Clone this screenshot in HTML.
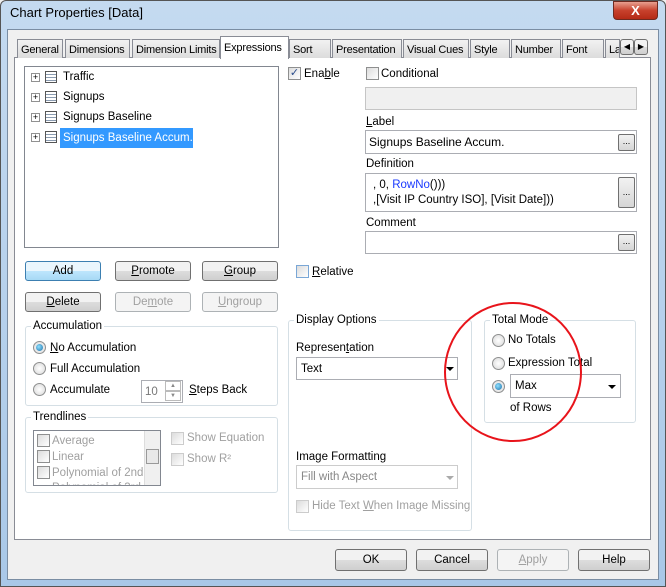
<!DOCTYPE html><html><head><style>
*{box-sizing:border-box}
body{margin:0;width:666px;height:587px;overflow:hidden;font-family:"Liberation Sans",sans-serif;font-size:11.5px;line-height:16px;color:#000;background:#f0f0f0;position:relative}
.a{position:absolute;white-space:nowrap}
.win{left:0;top:0;width:666px;height:587px;background:linear-gradient(#c4daf0,#a9c8e8);border:1px solid #555;border-radius:6px 6px 0 0}
.client{left:7px;top:29px;width:652px;height:551px;background:#f0f0f0;border:1px solid #7a8da3}
.panel{left:14px;top:57px;width:637px;height:483px;background:#fff;border:1px solid #898c95}
.tab{top:39px;height:19px;border:1px solid #898c95;border-bottom:none;background:linear-gradient(#f2f2f2,#dcdcdc);padding:2px 0 0 3px;overflow:hidden;font-size:11px;letter-spacing:-0.2px}
.sel{top:36px;height:23px;background:#fff;z-index:2}
.box{background:#fff;border:1px solid #abadb3}
.btn{border:1px solid #707070;border-radius:3px;background:linear-gradient(#f2f2f2 50%,#dddddd 50%,#cfcfcf);text-align:center;line-height:18px}
.dis{border-color:#adb2b5;color:#a0a0a0;background:#f4f4f4}
.grp{border:1px solid #d5dfe5;border-radius:3px}
.gt{background:#fff;padding:0 2px}
.cb{width:13px;height:13px;border:1px solid #8e8f8f;background:linear-gradient(135deg,#dcdcdc,#fff)}
.rb{width:13px;height:13px;border:1px solid #8e8f8f;border-radius:50%;background:radial-gradient(#fff,#d8d8d8)}
.rb.on::after{content:"";position:absolute;left:2px;top:2px;width:7px;height:7px;border-radius:50%;background:radial-gradient(circle at 40% 40%,#8fe0ff,#1b6fa8)}
.g{color:#a0a0a0}
.tri{width:0;height:0;border-left:4px solid transparent;border-right:4px solid transparent;border-top:4px solid #000}
.dots{width:17px;height:17px;border:1px solid #707070;border-radius:2px;background:linear-gradient(#f2f2f2,#d6d6d6);font-size:9px;text-align:center;line-height:12px}
.it{height:20px;line-height:21px}
.pl{width:9px;height:9px;border:1px solid #919191;font-size:9px;line-height:7px;text-align:center;background:#fff}
.ic{width:12px;height:12px;border:1px solid #555;background:repeating-linear-gradient(#fff 0 2px,#8a9bb0 2px 3px)}
</style></head><body>
<div class="a win"></div>
<div class="a" style="left:10px;top:5px;font-size:13px">Chart Properties [Data]</div>
<div class="a" style="left:613px;top:1px;width:45px;height:19px;border:1px solid #6e2a20;border-radius:0 0 4px 4px;background:linear-gradient(#e8a090,#c7412c 50%,#b52a16);color:#fff;font-weight:bold;text-align:center;line-height:18px;font-size:13px">X</div>
<div class="a client"></div>
<div class="a panel"></div>
<div class="a tab" style="left:17px;width:46px">General</div>
<div class="a tab" style="left:65px;width:65px">Dimensions</div>
<div class="a tab" style="left:132px;width:88px">Dimension Limits</div>
<div class="a tab sel" style="left:220px;width:69px;padding-top:3px">Expressions</div>
<div class="a tab" style="left:289px;width:42px">Sort</div>
<div class="a tab" style="left:332px;width:70px">Presentation</div>
<div class="a tab" style="left:403px;width:66px">Visual Cues</div>
<div class="a tab" style="left:470px;width:40px">Style</div>
<div class="a tab" style="left:511px;width:50px">Number</div>
<div class="a tab" style="left:562px;width:42px">Font</div>
<div class="a tab" style="left:605px;width:15px">La</div>
<div class="a btn" style="left:620px;top:39px;width:14px;height:16px;font-size:8px;line-height:14px">◀</div>
<div class="a btn" style="left:634px;top:39px;width:14px;height:16px;font-size:8px;line-height:14px">▶</div>

<div class="a box" style="left:24px;top:66px;width:255px;height:182px;border-color:#828790"></div>
<div class="a pl" style="left:31px;top:73px">+</div><div class="a ic" style="left:45px;top:71px"></div><div class="a it" style="left:60px;top:67px;padding:0 3px">Traffic</div>
<div class="a pl" style="left:31px;top:93px">+</div><div class="a ic" style="left:45px;top:91px"></div><div class="a it" style="left:60px;top:87px;padding:0 3px">Signups</div>
<div class="a pl" style="left:31px;top:113px">+</div><div class="a ic" style="left:45px;top:111px"></div><div class="a it" style="left:60px;top:107px;padding:0 3px">Signups Baseline</div>
<div class="a pl" style="left:31px;top:133px">+</div><div class="a ic" style="left:45px;top:131px"></div><div class="a it" style="left:60px;top:128px;width:133px;background:#3399ff;color:#fff;padding:0 3px">Signups Baseline Accum.</div>

<div class="a btn" style="left:25px;top:261px;width:76px;height:20px;border-color:#3c7fb1;background:linear-gradient(#eaf6fd 50%,#bee6fd 50%,#a7d9f5)">Add</div>
<div class="a btn" style="left:115px;top:261px;width:76px;height:20px"><u>P</u>romote</div>
<div class="a btn" style="left:202px;top:261px;width:76px;height:20px"><u>G</u>roup</div>
<div class="a btn" style="left:25px;top:292px;width:76px;height:20px"><u>D</u>elete</div>
<div class="a btn dis" style="left:115px;top:292px;width:76px;height:20px">De<u>m</u>ote</div>
<div class="a btn dis" style="left:202px;top:292px;width:76px;height:20px"><u>U</u>ngroup</div>

<div class="a grp" style="left:25px;top:326px;width:253px;height:80px"></div>
<div class="a gt" style="left:31px;top:318px">Accumulation</div>
<div class="a rb on" style="left:33px;top:341px"></div><div class="a" style="left:50px;top:340px"><u>N</u>o Accumulation</div>
<div class="a rb" style="left:33px;top:362px"></div><div class="a" style="left:50px;top:361px">Full Accumulation</div>
<div class="a rb" style="left:33px;top:383px"></div><div class="a" style="left:50px;top:382px">Accumulate</div>
<div class="a box" style="left:141px;top:380px;width:42px;height:23px;color:#777;padding:3px 0 0 3px">10</div>
<div class="a" style="left:165px;top:381px;width:16px;height:10px;border:1px solid #bbb;font-size:6px;line-height:8px;text-align:center;color:#888">▲</div>
<div class="a" style="left:165px;top:391px;width:16px;height:10px;border:1px solid #bbb;font-size:6px;line-height:8px;text-align:center;color:#888">▼</div>
<div class="a" style="left:189px;top:382px"><u>S</u>teps Back</div>

<div class="a grp" style="left:25px;top:417px;width:253px;height:76px"></div>
<div class="a gt" style="left:31px;top:409px">Trendlines</div>
<div class="a box" style="left:33px;top:430px;width:128px;height:56px;border-color:#828790;overflow:hidden">
<div class="a cb" style="left:3px;top:3px"></div><div class="a g" style="left:18px;top:2px">Average</div>
<div class="a cb" style="left:3px;top:19px"></div><div class="a g" style="left:18px;top:18px">Linear</div>
<div class="a cb" style="left:3px;top:35px"></div><div class="a g" style="left:18px;top:34px">Polynomial of 2nd d</div>
<div class="a g" style="left:18px;top:49px">Polynomial of 3rd d</div>
<div class="a" style="right:0;top:0;width:16px;height:54px;background:#f0f0f0;border-left:1px solid #ddd"><div class="a" style="left:1px;top:18px;width:13px;height:15px;border:1px solid #999;background:#e8e8e8"></div></div>
</div>
<div class="a cb" style="left:171px;top:432px;border-color:#ccc"></div><div class="a g" style="left:187px;top:430px">Show Equation</div>
<div class="a cb" style="left:171px;top:453px;border-color:#ccc"></div><div class="a g" style="left:187px;top:451px">Show R²</div>

<div class="a cb" style="left:288px;top:67px;text-align:center;font-size:11px;line-height:11px;color:#2a4c8c">✓</div><div class="a" style="left:304px;top:66px">Ena<u>b</u>le</div>
<div class="a cb" style="left:366px;top:67px"></div><div class="a" style="left:381px;top:66px">Conditional</div>
<div class="a" style="left:365px;top:87px;width:272px;height:23px;background:#f0f0f0;border:1px solid #c5c5c5"></div>
<div class="a" style="left:366px;top:114px"><u>L</u>abel</div>
<div class="a box" style="left:365px;top:130px;width:272px;height:24px;padding:3px 3px;font-size:12px">Signups Baseline Accum.</div>
<div class="a dots" style="left:618px;top:134px">...</div>
<div class="a" style="left:366px;top:156px">Definition</div>
<div class="a box" style="left:365px;top:173px;width:272px;height:39px;padding:4px 7px;line-height:15px">, 0, <span style="color:#1a3aff">RowNo</span>()))<br>,[Visit IP Country ISO], [Visit Date]))</div>
<div class="a dots" style="left:618px;top:177px;height:31px;line-height:28px">...</div>
<div class="a" style="left:366px;top:215px">Comment</div>
<div class="a box" style="left:365px;top:231px;width:272px;height:23px"></div>
<div class="a dots" style="left:618px;top:234px">...</div>
<div class="a cb" style="left:296px;top:265px;border-color:#7aa7d6"></div><div class="a" style="left:312px;top:264px"><u>R</u>elative</div>

<div class="a grp" style="left:288px;top:320px;width:184px;height:211px"></div>
<div class="a gt" style="left:294px;top:312px">Display Options</div>
<div class="a" style="left:296px;top:340px">Represen<u>t</u>ation</div>
<div class="a box" style="left:296px;top:357px;width:162px;height:23px;padding:3px 4px">Text</div>
<div class="a tri" style="left:446px;top:367px"></div>
<div class="a" style="left:296px;top:449px">Image Formatting</div>
<div class="a box" style="left:296px;top:465px;width:162px;height:24px;padding:3px 4px;color:#888;border-color:#ccc">Fill with Aspect</div>
<div class="a tri" style="left:446px;top:476px;border-top-color:#aaa"></div>
<div class="a cb" style="left:296px;top:500px;border-color:#ccc"></div><div class="a g" style="left:312px;top:498px">Hide Text <u>W</u>hen Image Missing</div>

<div class="a grp" style="left:484px;top:320px;width:152px;height:103px"></div>
<div class="a gt" style="left:490px;top:312px">Total Mode</div>
<div class="a rb" style="left:492px;top:334px"></div><div class="a" style="left:508px;top:332px">No Totals</div>
<div class="a rb" style="left:492px;top:357px"></div><div class="a" style="left:508px;top:355px">Expression Total</div>
<div class="a rb on" style="left:492px;top:380px"></div>
<div class="a box" style="left:510px;top:374px;width:111px;height:24px;padding:3px 4px">Max</div>
<div class="a tri" style="left:608px;top:385px"></div>
<div class="a" style="left:510px;top:400px">of Rows</div>

<svg class="a" style="left:0;top:0" width="666" height="587"><ellipse cx="513" cy="372" rx="68" ry="69" fill="none" stroke="#e8141b" stroke-width="2"/></svg>

<div class="a btn" style="left:335px;top:549px;width:72px;height:22px;line-height:20px">OK</div>
<div class="a btn" style="left:416px;top:549px;width:72px;height:22px;line-height:20px">Cancel</div>
<div class="a btn dis" style="left:497px;top:549px;width:72px;height:22px;line-height:20px"><u>A</u>pply</div>
<div class="a btn" style="left:578px;top:549px;width:72px;height:22px;line-height:20px">Help</div>
</body></html>
